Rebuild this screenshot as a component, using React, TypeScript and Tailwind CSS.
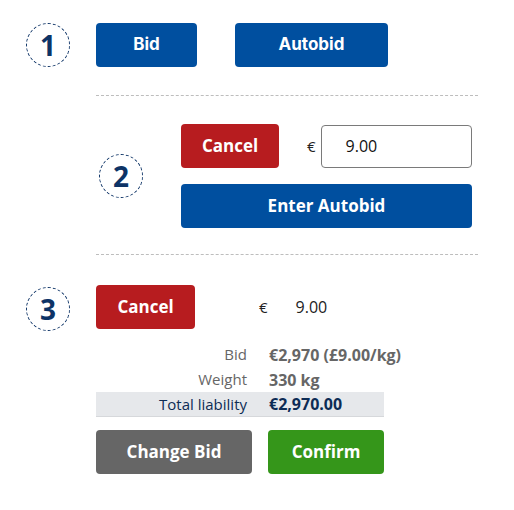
import React from "react";

const sans = "font-['Open_Sans',sans-serif]";

function Step({ n }: { n: number }) {
  return (
    <div className="w-[44px] h-[44px] shrink-0 rounded-full border border-dashed border-[#0d3366] flex items-center justify-center">
      <span className={`${sans} text-[28px] font-bold leading-none text-[#0d3366] -mt-[1px]`}>
        {n}
      </span>
    </div>
  );
}

function Divider() {
  return (
    <div className="ml-[96px] w-[382px] h-0 border-t border-dashed border-[#bdbdbd]" />
  );
}

function Btn({
  children,
  className,
}: {
  children: React.ReactNode;
  className: string;
}) {
  return (
    <button
      className={`h-[44px] rounded-[4px] text-white text-[17px] font-bold flex items-center justify-center whitespace-nowrap ${className}`}
    >
      {children}
    </button>
  );
}

export default function App() {
  return (
    <div className="w-[514px] h-[510px] bg-white pt-[23px]">
      {/* Step 1 */}
      <div className="flex items-center pl-[26px]">
        <Step n={1} />
        <div className="flex ml-[26px] gap-x-[38px]">
          <Btn className="w-[101px] bg-[#004f9f] font-['Inter',sans-serif]">Bid</Btn>
          <Btn className="w-[153px] bg-[#004f9f] font-['Inter',sans-serif]">Autobid</Btn>
        </div>
      </div>

      <div className="mt-[28px]">
        <Divider />
      </div>

      {/* Step 2 */}
      <div className="flex items-center pl-[99px] mt-[28px]">
        <Step n={2} />
        <div className="ml-[38px] w-[291px] flex flex-col gap-y-[16px]">
          <div className="flex items-center">
            <Btn className={`w-[98px] bg-[#b71c1f] ${sans}`}>Cancel</Btn>
            <span className={`${sans} ml-[28px] text-[15px] text-[#222]`}>€</span>
            <div className={`${sans} ml-[5px] flex-1 h-[43px] rounded-[4px] border border-[#7a7a7a] flex items-center pl-[24px] text-[16px] text-[#111]`}>
              9.00
            </div>
          </div>
          <Btn className={`w-full bg-[#004f9f] ${sans}`}>Enter Autobid</Btn>
        </div>
      </div>

      <div className="mt-[26px]">
        <Divider />
      </div>

      {/* Step 3 */}
      <div className="flex pl-[26px] mt-[30px]">
        <div className="pt-[2px]">
          <Step n={3} />
        </div>
        <div className="ml-[26px] w-[288px] flex flex-col">
          <div className="flex items-center">
            <Btn className={`w-[99px] bg-[#b71c1f] ${sans}`}>Cancel</Btn>
            <span className={`${sans} ml-[64px] text-[15px] text-[#222]`}>€</span>
            <span className={`${sans} ml-[28px] text-[16px] text-[#222]`}>9.00</span>
          </div>

          <div className={`${sans} mt-[13px] flex flex-col whitespace-nowrap`}>
            <div className="flex items-center h-[25px]">
              <span className="w-[151px] shrink-0 text-right text-[15px] text-[#666]">Bid</span>
              <span className="ml-[22px] text-[16px] font-bold text-[#666]">€2,970 (£9.00/kg)</span>
            </div>
            <div className="flex items-center h-[25px]">
              <span className="w-[151px] shrink-0 text-right text-[15px] text-[#666]">Weight</span>
              <span className="ml-[22px] text-[16px] font-bold text-[#666]">330 kg</span>
            </div>
            <div className="flex items-center h-[25px] bg-[#e6e8eb] border-b border-[#d6d8db]">
              <span className="w-[151px] shrink-0 text-right text-[15px] text-[#0d2c55]">Total liability</span>
              <span className="ml-[22px] text-[16px] font-bold text-[#0d2c55]">€2,970.00</span>
            </div>
          </div>

          <div className="flex gap-x-[16px] mt-[13px]">
            <Btn className={`w-[156px] bg-[#666666] ${sans}`}>Change Bid</Btn>
            <Btn className={`w-[116px] bg-[#35961a] ${sans}`}>Confirm</Btn>
          </div>
        </div>
      </div>
    </div>
  );
}
